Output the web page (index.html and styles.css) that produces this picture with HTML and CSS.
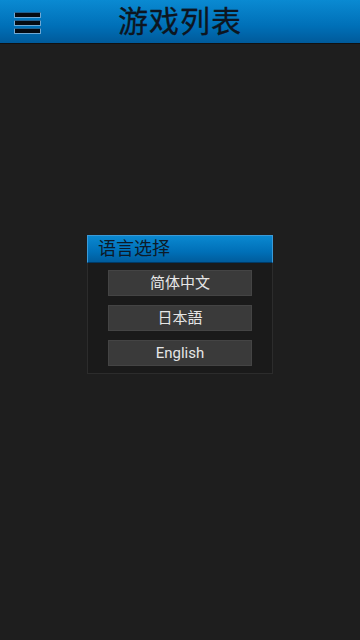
FILE: index.html
```html
<!DOCTYPE html>
<html>
<head>
<meta charset="utf-8">
<link rel="stylesheet" href="styles.css">
</head>
<body>
<div class="header">
  <div class="menu"><span></span><span></span><span></span></div>
  <div class="title">游戏列表</div>
</div>
<div class="main">
  <div class="dialog">
    <div class="dlg-head">语言选择</div>
    <div class="dlg-body">
      <div class="btn">简体中文</div>
      <div class="btn">日本語</div>
      <div class="btn">English</div>
    </div>
  </div>
</div>
</body>
</html>
```
FILE: styles.css
```css
html, body {
  margin: 0;
  padding: 0;
  background: #1e1e1e;
  width: 360px;
  height: 640px;
  overflow: hidden;
  font-family: Roboto, "Noto Sans CJK SC", sans-serif;
}
.header {
  height: 43px;
  border-bottom: 1px solid #111;
  background: linear-gradient(to bottom, #0a8ad2 0%, #0070b8 60%, #005a9a 100%);
  display: flex;
  align-items: center;
  justify-content: center;
  position: relative;
}
.menu {
  position: absolute;
  left: 14px;
  top: 12px;
  display: flex;
  flex-direction: column;
  gap: 2px;
}
.menu span {
  display: block;
  width: 25px;
  height: 4px;
  background: #050a12;
  border: 1px solid #6fa8d4;
  border-top-color: #1f5f90;
  border-radius: 1px;
}
.title {
  font-size: 30px;
  line-height: 43px;
  color: #0d1520;
  letter-spacing: 1px;
  -webkit-text-stroke: 0.3px #0d1520;
}
.main {
  height: 596px;
  display: flex;
  justify-content: center;
  padding-top: 191px;
  box-sizing: border-box;
}
.dialog {
  width: 186px;
  height: 139px;
  display: flex;
  flex-direction: column;
  background: #1a1a1a;
  border: 1px solid #2c2c2c;
  box-sizing: border-box;
}
.dlg-head {
  height: 28px;
  background: linear-gradient(to bottom, #0a88d0 0%, #0070b8 60%, #005c9c 100%);
  border: 1px solid #3a9ad8;
  border-bottom: 1px solid #003a66;
  box-sizing: border-box;
  color: #0d1a28;
  font-size: 18px;
  line-height: 26px;
  padding-left: 10px;
  margin: -1px -1px 0 -1px;
}
.dlg-body {
  display: flex;
  flex-direction: column;
  align-items: center;
  gap: 9px;
  padding-top: 7px;
}
.btn {
  width: 144px;
  height: 26px;
  background: #3a3a3a;
  border: 1px solid #444;
  box-sizing: border-box;
  color: #e6e6e6;
  font-size: 15px;
  line-height: 24px;
  text-align: center;
}
```
